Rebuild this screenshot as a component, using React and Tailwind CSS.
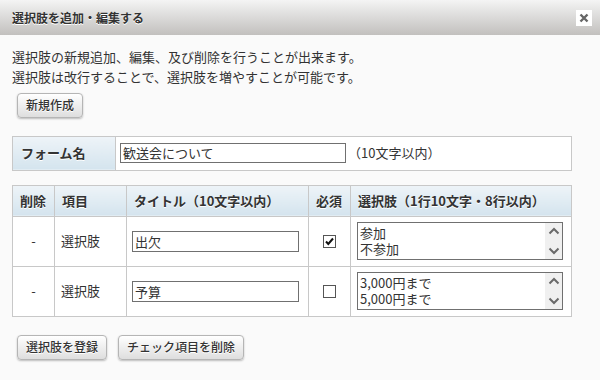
import React from 'react';

const rows = [
  { id: 1, title: '出欠', required: true, options: ['参加', '不参加'] },
  { id: 2, title: '予算', required: false, options: ['3,000円まで', '5,000円まで'] },
];

const Button = ({ children }) => (
  <button className="h-[25px] px-[8px] rounded-[4px] border border-[#b5b5b5] bg-linear-to-b from-[#ffffff] to-[#dedede] text-[12px] font-medium leading-none text-[#333] shadow-[0_1px_2px_rgba(0,0,0,0.25)] [text-shadow:0_1px_0_#fff]">
    {children}
  </button>
);

const Checkbox = ({ checked }) => (
  <span className="inline-flex w-[13px] h-[13px] items-center justify-center border border-[#555] bg-white">
    {checked && (
      <svg width="11" height="11" viewBox="0 0 11 11">
        <path d="M2 5.5 L4.3 8 L9 2.5" fill="none" stroke="#111" strokeWidth="2" />
      </svg>
    )}
  </span>
);

const Chevron = ({ up }) => (
  <svg width="12" height="8" viewBox="0 0 12 8">
    <path
      d={up ? 'M1.5 6.5 L6 2 L10.5 6.5' : 'M1.5 1.5 L6 6 L10.5 1.5'}
      fill="none"
      stroke="#6a6a6a"
      strokeWidth="2"
    />
  </svg>
);

const OptionsBox = ({ options }) => (
  <div className="flex w-[206px] h-[38px] border border-[#707070] bg-white">
    <div className="flex-1 pl-[2px] pt-[2px] text-[13px] leading-[16px]">
      {options.map((o) => (
        <div key={o}>{o}</div>
      ))}
    </div>
    <div className="w-[17px] bg-[#f0f0f0] flex flex-col items-center justify-between py-[4px]">
      <Chevron up />
      <Chevron />
    </div>
  </div>
);

const th = 'border border-[#c8c8c8] bg-linear-to-b from-[#eef4f8] to-[#d4e4ee] text-left font-bold px-[7px] [text-shadow:0_1px_0_#fff]';
const td = 'border border-[#c8c8c8] bg-white';

export default function App() {
  return (
    <div className="w-[600px] h-[380px] bg-[#fafafa] text-[#333] font-['Noto_Sans_CJK_JP',sans-serif] overflow-hidden">
      {/* Title bar */}
      <div className="h-[35px] flex items-center justify-between pl-3 pr-2 bg-linear-to-b from-[#f4f4f4] to-[#c2c0be]">
        <h1 className="text-[12px] font-bold [text-shadow:0_1px_0_#fff]">選択肢を追加・編集する</h1>
        <button className="w-4 h-4 bg-white flex items-center justify-center">
          <svg width="10" height="10" viewBox="0 0 10 10">
            <path d="M1.5 1.5 L8.5 8.5 M8.5 1.5 L1.5 8.5" stroke="#666" strokeWidth="2.4" />
          </svg>
        </button>
      </div>

      <div className="px-3 pt-[12px]">
        <p className="text-[13px] leading-[20px]">
          選択肢の新規追加、編集、及び削除を行うことが出来ます。
          <br />
          選択肢は改行することで、選択肢を増やすことが可能です。
        </p>
        <div className="mt-[4px] ml-[5px]">
          <Button>新規作成</Button>
        </div>

        {/* Form name */}
        <table className="mt-[18px] w-[560px] border-collapse table-fixed text-[13px]">
          <tbody>
            <tr className="h-[34px]">
              <th className={`${th} w-[103px] pl-[8px]`}>フォーム名</th>
              <td className={`${td} pl-[4px]`}>
                <div className="flex items-center gap-[2px]">
                  <div className="w-[226px] h-[20px] border border-[#707070] bg-white pl-[2px] leading-[18px]">歓送会について</div>
                  <span>（10文字以内）</span>
                </div>
              </td>
            </tr>
          </tbody>
        </table>

        {/* Options table */}
        <table className="mt-[14px] w-[560px] border-collapse table-fixed text-[13px]">
          <colgroup>
            <col className="w-[42px]" />
            <col className="w-[72px]" />
            <col className="w-[182px]" />
            <col className="w-[42px]" />
            <col />
          </colgroup>
          <thead>
            <tr className="h-[31px]">
              <th className={th}>削除</th>
              <th className={th}>項目</th>
              <th className={th}>タイトル（10文字以内）</th>
              <th className={th}>必須</th>
              <th className={th}>選択肢（1行10文字・8行以内）</th>
            </tr>
          </thead>
          <tbody>
            {rows.map((r) => (
              <tr key={r.id} className="h-[50px]">
                <td className={`${td} text-center`}>-</td>
                <td className={`${td} px-[6px]`}>選択肢</td>
                <td className={`${td} px-[5px]`}>
                  <div className="w-[167px] h-[21px] border border-[#707070] bg-white pl-[2px] leading-[19px]">{r.title}</div>
                </td>
                <td className={`${td} text-center`}>
                  <div className="flex justify-center">
                    <Checkbox checked={r.required} />
                  </div>
                </td>
                <td className={`${td} px-[6px]`}>
                  <OptionsBox options={r.options} />
                </td>
              </tr>
            ))}
          </tbody>
        </table>

        <div className="mt-[18px] ml-[5px] flex gap-[11px]">
          <Button>選択肢を登録</Button>
          <Button>チェック項目を削除</Button>
        </div>
      </div>
    </div>
  );
}
